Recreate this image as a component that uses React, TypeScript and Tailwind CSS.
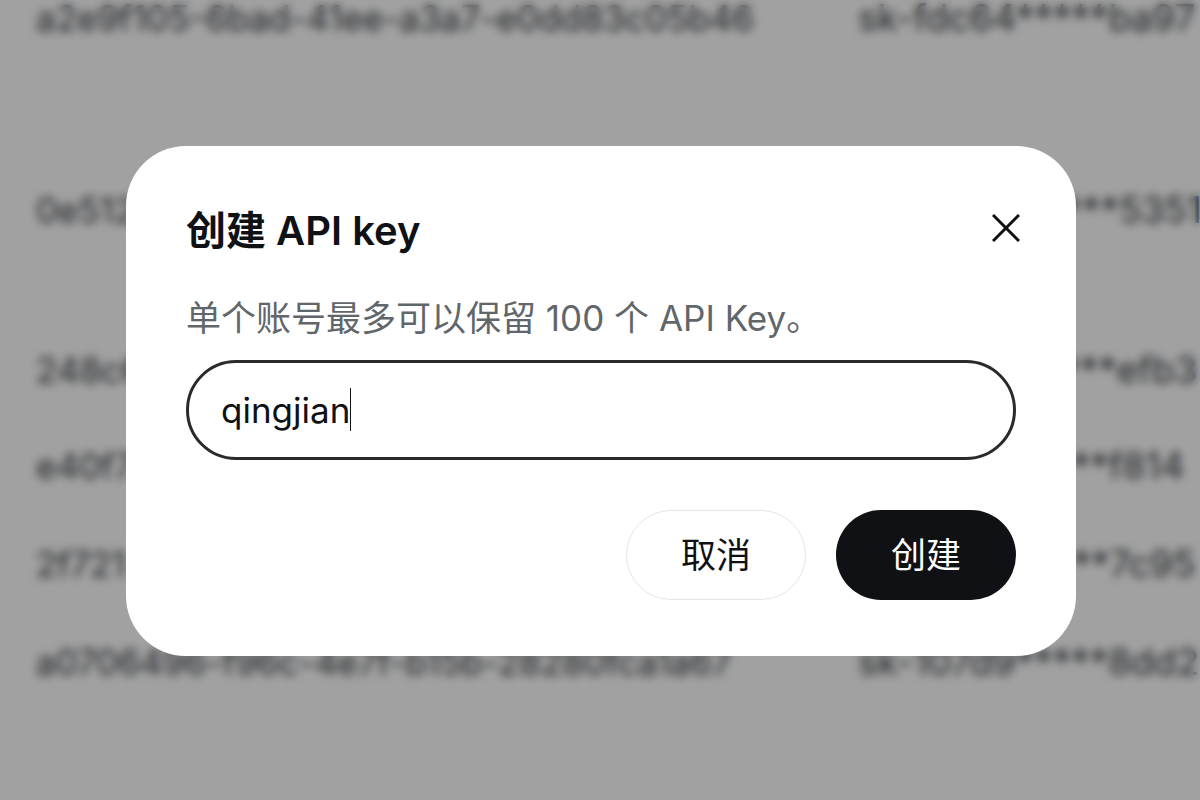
import React from "react";

const keys = [
  { id: "a2e9f105-6bad-41ee-a3a7-e0dd83c05b46", secret: "sk-fdc64*****ba97", height: "h-48" },
  { id: "0e512", secret: "sk-0b9e2*****5351", height: "h-40" },
  { id: "248c6", secret: "sk-5ea08*****efb3", height: "h-24" },
  { id: "e40f7", secret: "sk-c41d7*****f814", height: "h-[98px]" },
  { id: "2f721", secret: "sk-8e3b1*****7c95", height: "h-[98px]" },
  { id: "a0706496-f96c-4e7f-b15b-28280fca1a67", secret: "sk-107d9*****8dd2", height: "h-24" },
];

const KeyTable = () => (
  <table className="w-full table-fixed border-collapse text-left text-[#34393f]">
    <colgroup>
      <col className="w-[858px]" />
      <col />
    </colgroup>
    <tbody>
      {keys.map(({ id, secret, height }) => (
        <tr key={id} className={height}>
          <td className="p-0 pl-9 align-top whitespace-nowrap">{id}</td>
          <td className="p-0 align-top text-[37px] whitespace-nowrap">{secret}</td>
        </tr>
      ))}
    </tbody>
  </table>
);

const CreateKeyDialog = () => (
  <form
    role="dialog"
    aria-labelledby="dialog-title"
    className="w-full max-w-[950px] rounded-[60px] bg-white px-15 pt-14 pb-14"
    onSubmit={(e) => e.preventDefault()}
  >
    <div className="flex items-center justify-between">
      <h2 id="dialog-title" className="text-[40px] leading-[58px] font-semibold">
        创建 API key
      </h2>
      <button type="button" aria-label="关闭" className="-mt-1.5 -mr-1">
        <svg
          width="28"
          height="28"
          viewBox="0 0 28 28"
          fill="none"
          stroke="currentColor"
          strokeWidth="3"
        >
          <path d="M1 1l26 26M27 1l-26 26" />
        </svg>
      </button>
    </div>
    <label htmlFor="key-name" className="mt-[34px] block leading-[48px] text-[#61666b]">
      单个账号最多可以保留 100 个 API Key。
    </label>
    <div className="relative mt-[18px]">
      <input
        id="key-name"
        type="text"
        defaultValue="qingjian"
        className="block h-25 w-full rounded-full border-[3px] border-[#2a2a2a] px-8 caret-transparent outline-none"
      />
      <span className="absolute top-7 left-[164px] h-[43px] w-px bg-[#0f1115]" />
    </div>
    <div className="mt-[50px] flex justify-end gap-[30px]">
      <button type="button" className="h-[90px] w-45 rounded-full border border-[#e5e5e5]">
        取消
      </button>
      <button type="submit" className="h-[90px] w-45 rounded-full bg-[#0f1115] text-white">
        创建
      </button>
    </div>
  </form>
);

export default function App() {
  return (
    <div className="relative h-screen overflow-hidden bg-white font-['Inter','Noto_Sans_CJK_SC',sans-serif] text-[35px] leading-9 text-[#0f1115]">
      <KeyTable />
      <div className="absolute inset-0 flex items-center justify-center bg-black/37 pt-0.5 pl-0.5 backdrop-blur-[5px]">
        <CreateKeyDialog />
      </div>
    </div>
  );
}
